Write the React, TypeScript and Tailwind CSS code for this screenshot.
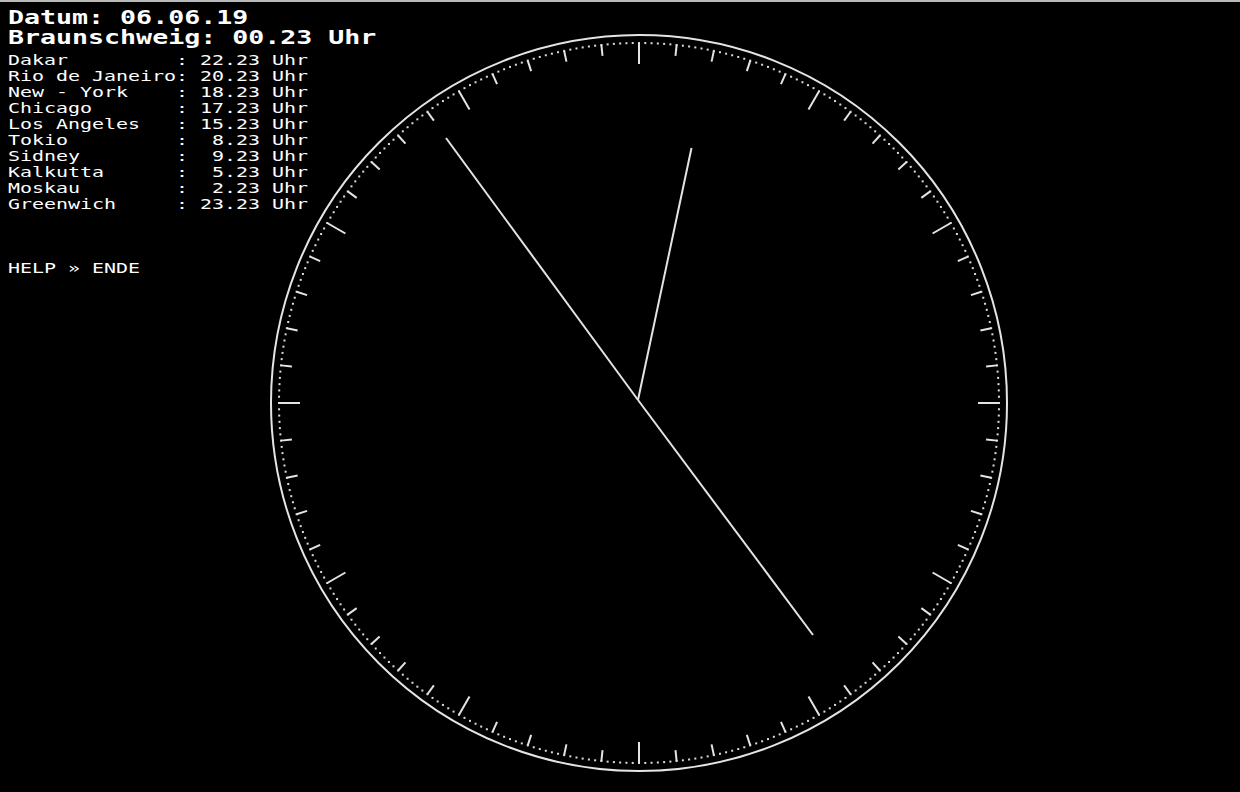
const CX = 639;
const CY = 403;

const cities: [string, string][] = [
  ["Dakar", "22.23"],
  ["Rio de Janeiro", "20.23"],
  ["New - York", "18.23"],
  ["Chicago", "17.23"],
  ["Los Angeles", "15.23"],
  ["Tokio", "8.23"],
  ["Sidney", "9.23"],
  ["Kalkutta", "5.23"],
  ["Moskau", "2.23"],
  ["Greenwich", "23.23"],
];

function polar(r: number, deg: number) {
  const a = (deg * Math.PI) / 180;
  return { x: CX + r * Math.sin(a), y: CY - r * Math.cos(a) };
}

function Clock() {
  const dots = Array.from({ length: 360 }, (_, i) => polar(360, i));
  const ticks = Array.from({ length: 60 }, (_, i) => {
    const major = i % 5 === 0;
    return { a: polar(major ? 339 : 349, i * 6), b: polar(360, i * 6) };
  });

  return (
    <svg
      width="1240"
      height="790"
      viewBox="0 2 1240 790"
      className="col-start-1 row-start-1 block"
    >
      <circle cx={CX} cy={CY} r={368} fill="none" stroke="#e4e4e4" strokeWidth="2" />
      {dots.map((d, i) => (
        <rect key={i} x={d.x - 1} y={d.y - 1} width="2" height="2" fill="#dcdcdc" />
      ))}
      {ticks.map((t, i) => (
        <line key={i} x1={t.a.x} y1={t.a.y} x2={t.b.x} y2={t.b.y} stroke="#e4e4e4" strokeWidth="2" />
      ))}
      {/* hour, minute and second hands */}
      <line x1="638" y1="400" x2="691.5" y2="148" stroke="#e4e4e4" strokeWidth="2" />
      <line x1="638" y1="400" x2="813" y2="635" stroke="#e4e4e4" strokeWidth="2" />
      <line x1="638" y1="400" x2="446" y2="138" stroke="#e4e4e4" strokeWidth="2" />
    </svg>
  );
}

export default function App() {
  return (
    <div className="grid h-[792px] w-[1240px] overflow-hidden border-t-2 border-[#b8b8b8] bg-black text-white">
      <Clock />
      <div className="col-start-1 row-start-1 self-start pl-2 pt-[5px] font-['DejaVu_Sans_Mono',monospace]">
        <div className="origin-left scale-x-[1.4] text-[19px] leading-[20px] font-bold whitespace-pre">
          <div>Datum: 06.06.19</div>
          <div>Braunschweig: 00.23 Uhr</div>
        </div>
        <div className="mt-[5px] origin-left scale-x-[1.4] text-[14.24px] leading-[16px] whitespace-pre">
          {cities.map(([name, time]) => (
            <div key={name}>
              {name.padEnd(14, " ")}: {time.padStart(5, " ")} Uhr
            </div>
          ))}
          <div className="mt-[48px]">HELP » ENDE</div>
        </div>
      </div>
    </div>
  );
}
